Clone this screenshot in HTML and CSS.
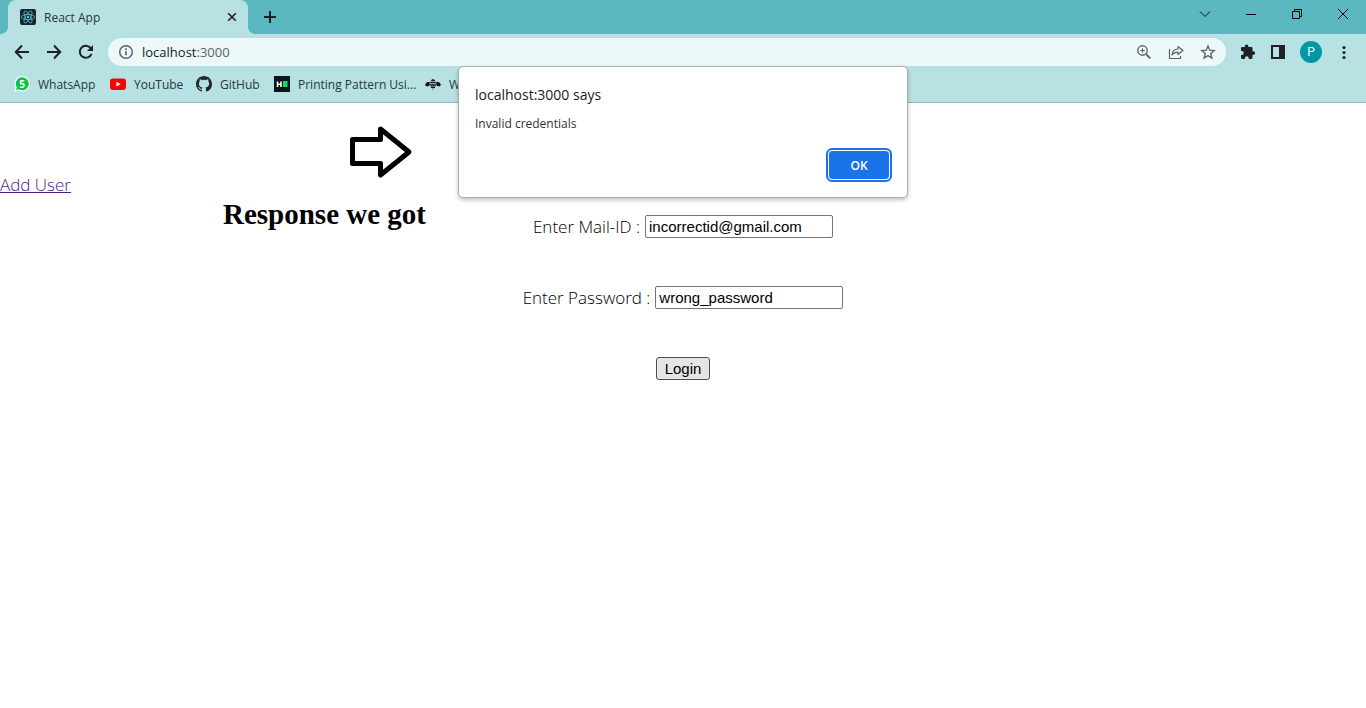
FILE: index.html
```html
<!DOCTYPE html>
<html lang="en">
<head>
<meta charset="utf-8">
<title>React App</title>
<link rel="stylesheet" href="styles.css">
</head>
<body>
<div class="browser">
  <header class="chrome">
    <div class="tabstrip">
      <div class="tab">
        <svg class="tab-icon" width="16" height="16" viewBox="0 0 16 16" fill="none" stroke="#5cc9e6" stroke-width=".7"><rect width="16" height="16" rx="2" fill="#20232a" stroke="none"/><ellipse cx="8" cy="8" rx="6.7" ry="2.6"/><ellipse cx="8" cy="8" rx="6.7" ry="2.6" transform="rotate(60 8 8)"/><ellipse cx="8" cy="8" rx="6.7" ry="2.6" transform="rotate(120 8 8)"/><circle cx="8" cy="8" r="1.2" fill="#5cc9e6" stroke="none"/></svg>
        <span class="tab-title">React App</span>
        <button class="icon-btn" aria-label="Close tab"><svg width="16" height="16" viewBox="0 0 16 16" stroke="#202124" stroke-width="1.6"><path d="M4.200 4.200l7.600 7.600M11.800 4.200l-7.600 7.600"/></svg></button>
      </div>
      <button class="icon-btn new-tab" aria-label="New tab"><svg width="16" height="16" viewBox="0 0 16 16" stroke="#202124" stroke-width="2"><path d="M8 2v12M2 8h12"/></svg></button>
      <div class="window-buttons">
        <button class="icon-btn" aria-label="Search tabs"><svg width="16" height="16" viewBox="0 0 16 16" fill="none" stroke="#111"><path d="M3 5.500l5 5 5-5"/></svg></button>
        <button class="icon-btn" aria-label="Minimize"><svg width="16" height="16" viewBox="0 0 16 16" stroke="#000"><path d="M3 8.500h10"/></svg></button>
        <button class="icon-btn" aria-label="Restore"><svg width="16" height="16" viewBox="0 0 16 16" fill="none" stroke="#000"><path d="M3.500 5.500h7v7h-7zM5.500 5.500v-2h7v7h-2"/></svg></button>
        <button class="icon-btn" aria-label="Close"><svg width="16" height="16" viewBox="0 0 16 16" stroke="#000"><path d="M3 3l10 10M13 3L3 13"/></svg></button>
      </div>
    </div>
    <div class="toolbar">
      <div class="nav">
        <button class="icon-btn" aria-label="Back"><svg width="16" height="16" viewBox="0 0 16 16" fill="none" stroke="#202124" stroke-width="2"><path d="M15 8H2M8 1.500L1.800 8 8 14.500"/></svg></button>
        <button class="icon-btn" aria-label="Forward"><svg width="16" height="16" viewBox="0 0 16 16" fill="none" stroke="#202124" stroke-width="2"><path d="M1 8h13M8 1.500L14.200 8 8 14.500"/></svg></button>
        <button class="icon-btn" aria-label="Reload"><svg width="16" height="16" viewBox="0 0 16 16" fill="none" stroke="#202124" stroke-width="2"><path d="M13.500 9.800A6 6 0 1 1 12.500 4"/><path d="M15 1v6H9z" fill="#202124" stroke="none"/></svg></button>
      </div>
      <div class="omnibox">
        <svg width="16" height="16" viewBox="0 0 16 16" fill="none" stroke="#5f6368" stroke-width="1.500"><circle cx="8" cy="8" r="6.300"/><path d="M8 7.200v4M8 4.300v1.600" stroke-width="1.700"/></svg>
        <div class="url">localhost<span class="port">:3000</span></div>
        <button class="icon-btn" aria-label="Zoom"><svg width="16" height="16" viewBox="0 0 16 16" fill="none" stroke="#5f6368" stroke-width="1.400"><circle cx="6.500" cy="6.500" r="4.700"/><path d="M10 10l4.300 4.300" stroke-width="1.800"/><path d="M6.500 4.200v4.600M4.200 6.500h4.600" stroke-width="1.100"/></svg></button>
        <button class="icon-btn" aria-label="Share"><svg width="16" height="16" viewBox="0 0 16 16" fill="none" stroke="#5f6368" stroke-width="1.200"><path d="M1.500 5v9.500h11V12"/><path d="M10 2.500l5 4-5 4V8.200c-3 0-4.500.8-6 2.800.3-3.600 2.500-5.800 6-6z" stroke-linejoin="round"/></svg></button>
        <button class="icon-btn" aria-label="Bookmark"><svg width="16" height="16" viewBox="0 0 16 16" fill="none" stroke="#5f6368" stroke-width="1.400"><path d="M8 2l1.700 4.200 4.500.4-3.400 3 1 4.400L8 11.600 4.200 14l1-4.400-3.400-3 4.500-.4z"/></svg></button>
      </div>
      <div class="actions">
        <button class="icon-btn" aria-label="Extensions"><svg width="16" height="16" viewBox="0 0 16 16" fill="#202124"><path d="M13.300 7.300h-.8V4.400c0-.8-.6-1.300-1.300-1.300H8.400V2.400a1.800 1.800 0 0 0-3.600 0v.7H2.200C1.500 3.100 1 3.700 1 4.400v2.700h.8a1.900 1.900 0 0 1 0 3.800H1v2.700c0 .8.5 1.300 1.200 1.300h2.700v-.8a1.900 1.900 0 0 1 3.800 0v.8h2.500c.7 0 1.300-.5 1.300-1.300v-2.700h.8a1.800 1.800 0 0 0 0-3.600z"/></svg></button>
        <button class="icon-btn" aria-label="Side panel"><svg width="16" height="16" viewBox="0 0 16 16"><path d="M1 1h14v14H1zM3 3v10h6V3z" fill="#202124" fill-rule="evenodd"/></svg></button>
        <button class="avatar" aria-label="Profile">P</button>
        <button class="icon-btn" aria-label="Menu"><svg width="16" height="16" viewBox="0 0 16 16" fill="#202124"><circle cx="8" cy="3.500" r="1.600"/><circle cx="8" cy="8.500" r="1.600"/><circle cx="8" cy="13.500" r="1.600"/></svg></button>
      </div>
    </div>
    <nav class="bookmarks" aria-label="Bookmarks">
      <a class="bookmark" href="#"><svg width="16" height="16" viewBox="0 0 16 16"><path d="M8.300.2a7.600 7.600 0 1 1-3.700 14.300L.3 15.700l1.200-4.100A7.600 7.600 0 0 1 8.300.2z" fill="#fff"/><path d="M8.300 1.300a6.500 6.500 0 1 1-3.500 12L2 14l.8-2.700a6.500 6.500 0 0 1 5.500-10z" fill="#0cc143"/><text x="8" y="12" class="badge-number">5</text></svg>WhatsApp</a>
      <a class="bookmark bookmark-medium" href="#"><svg width="16" height="16" viewBox="0 0 16 16"><rect y="2.500" width="16" height="11.400" rx="3" fill="#f00"/><path d="M6.400 5.800v4.800l4.200-2.400z" fill="#fff"/></svg>YouTube</a>
      <a class="bookmark bookmark-small" href="#"><svg width="16" height="16" viewBox="0 0 16 16"><path fill="#24292f" d="M8 0C3.580 0 0 3.580 0 8c0 3.540 2.290 6.530 5.470 7.590.4.070.55-.17.55-.38 0-.19-.01-.82-.01-1.490-2.010.37-2.530-.49-2.690-.94-.09-.23-.48-.94-.82-1.130-.28-.15-.68-.52-.01-.53.63-.01 1.080.58 1.230.82.72 1.210 1.870.87 2.330.66.07-.52.28-.87.51-1.070-1.780-.2-3.640-.89-3.640-3.950 0-.87.31-1.590.82-2.150-.08-.2-.36-1.020.08-2.120 0 0 .67-.21 2.200.82a7.600 7.600 0 0 1 4 0c1.530-1.040 2.200-.82 2.200-.82.44 1.100.16 1.920.08 2.120.51.56.82 1.270.82 2.150 0 3.070-1.870 3.750-3.650 3.950.29.25.54.73.54 1.480 0 1.070-.01 1.930-.01 2.200 0 .21.15.46.55.38A8 8 0 0 0 16 8c0-4.420-3.580-8-8-8z"/></svg>GitHub</a>
      <a class="bookmark bookmark-large" href="#"><svg width="16" height="16" viewBox="0 0 16 16"><path fill="#0e141e" d="M0 0h16v16H0z"/><path d="M3.500 5.500v5.500M7 5.500v5.500M3.500 8.200H7" stroke="#fff" stroke-width="1.600"/><path fill="#00e65b" d="M9 5h4.500v6H9z"/></svg>Printing Pattern Usi...</a>
      <a class="bookmark" href="#"><svg width="16" height="16" viewBox="0 0 16 16" fill="#111"><path d="M6 5C6 2.600 10 2.600 10 5zM5.300 5.800h5.400v1.500H5.300zM5 8.200h6v1.500H5zM5.500 10.600h5L9.800 12H6.200zM7 12.700h2L8 13.700zM4.700 5.800L1.800 6.200 0 8.800l1.200 1.400h2.600l1-1.400zM11.300 5.800l2.900.4L16 8.800l-1.200 1.400h-2.600l-1-1.400z"/></svg>W</a>
    </nav>
  </header>

  <main class="page">
    <a class="add-user" href="#">Add User</a>
    <form class="login">
      <div class="field"><label for="mail">Enter Mail-ID :</label><input id="mail" type="text" value="incorrectid@gmail.com"></div>
      <div class="field"><label for="password">Enter Password :</label><input id="password" type="text" value="wrong_password"></div>
      <button class="submit" type="button">Login</button>
    </form>
    <div class="note">
      <svg class="note-arrow" width="64" height="54" viewBox="0 0 64 54" fill="none" stroke="#000" stroke-width="5" stroke-linejoin="round"><path d="M3.500 14.500h28V4l28.500 23L31.500 50V38.500h-28z"/></svg>
      <h1 class="note-text">Response we got</h1>
    </div>
  </main>

  <section class="dialog" role="alertdialog" aria-labelledby="dialog-title" aria-describedby="dialog-message">
    <h2 class="dialog-title" id="dialog-title">localhost:3000 says</h2>
    <p class="dialog-message" id="dialog-message">Invalid credentials</p>
    <button class="ok" type="button">OK</button>
  </section>
</div>
</body>
</html>
```

FILE: styles.css
```css
* { box-sizing: border-box; }
body { margin: 0; background: #fff; color: #000; font-family: "Open Sans", "Noto Sans", sans-serif; }
svg { display: block; flex: none; }
.browser { position: relative; min-height: 100vh; overflow: hidden; }
.chrome { background: #b8e1e4; border-bottom: 1px solid #91b3b6; }
.icon-btn { display: block; flex: none; padding: 0; border: 0; background: none; }

.tabstrip { display: flex; align-items: center; height: 34px; padding-left: 8px; background: #5bb8c1; }
.tab { position: relative; display: flex; align-items: center; gap: 8px; width: 240px; height: 34px; padding: 0 8px 0 12px; border-radius: 8px 8px 0 0; background: #b8e1e4; color: #26373a; font-size: 12px; }
.tab::before, .tab::after { content: ""; position: absolute; bottom: 0; width: 8px; height: 8px; }
.tab::before { right: 100%; background: radial-gradient(circle at 0 0, #5bb8c1 8px, #b8e1e4 8px); }
.tab::after { left: 100%; background: radial-gradient(circle at 100% 0, #5bb8c1 8px, #b8e1e4 8px); }
.tab-title { flex: 1; }
.new-tab { margin-left: 14px; }
.window-buttons { display: flex; gap: 30px; height: 28px; align-items: center; align-self: flex-start; margin-left: auto; padding-right: 15px; }

.toolbar { display: flex; align-items: center; height: 36px; padding: 0 14px; }
.nav { display: flex; gap: 16px; }
.omnibox { display: flex; flex: 1; align-items: center; gap: 16px; height: 28px; margin-left: 14px; padding: 0 10px; border-radius: 14px; background: #ecf8f9; }
.url { flex: 1; margin-left: -8px; color: #202124; font-size: 13px; }
.port { color: #5f6368; }
.actions { display: flex; align-items: center; gap: 14px; margin-left: 14px; }
.avatar { width: 22px; height: 22px; padding: 0; border: 0; border-radius: 50%; background: #0097a7; color: #fff; font: 12px/22px Roboto, sans-serif; }

.bookmarks { display: flex; height: 32px; padding: 0 14px 4px; }
.bookmark { display: flex; flex: none; align-items: center; gap: 8px; width: 96px; color: #26373a; font-size: 12px; text-decoration: none; white-space: nowrap; }
.bookmark-medium { width: 86px; }
.bookmark-small { width: 78px; }
.bookmark-large { width: 151px; }
.badge-number { fill: #fff; font: bold 10px "Open Sans", sans-serif; text-anchor: middle; }

.page { position: relative; padding-top: 70px; font-size: 17px; font-weight: 300; line-height: 23px; }
.add-user { color: #551a8b; text-decoration-thickness: 1px; }
.login { display: flex; flex-direction: column; align-items: center; gap: 48px; margin-top: 19px; }
.field { display: flex; align-items: center; gap: 5px; height: 23px; }
.field input { width: 188px; height: 23px; padding: 1px 3px; border: 1px solid #767676; border-radius: 2px; background: #fff; color: #000; font: 15px "Liberation Sans", Arial, sans-serif; }
.submit { width: 54px; height: 23px; padding: 0; border: 1px solid #4f4f4f; border-radius: 3px; background: #e5e5e5; color: #000; font: 15px "Liberation Sans", Arial, sans-serif; }

.note { position: absolute; top: 22px; left: 223px; }
.note-arrow { margin-left: 126px; }
.note-text { margin: 18px 0 0; font: bold 29px/35px "Liberation Serif", "Times New Roman", serif; }

.dialog { position: absolute; top: 66px; left: 50%; display: flex; flex-direction: column; width: 450px; padding: 18px 16px 17px; border: 1px solid #9fb3b5; border-radius: 5px; background: #fff; box-shadow: 0 2px 4px rgb(0 0 0 / 25%); transform: translateX(-50%); }
.dialog-title { margin: 0; color: #202124; font-size: 14px; font-weight: 400; line-height: 20px; }
.dialog-message { margin: 9px 0 16px; color: #303134; font-size: 12px; line-height: 20px; }
.ok { align-self: flex-end; width: 62px; height: 30px; margin-right: 1px; padding: 0; border: 1px solid #fff; border-radius: 4px; outline: 2px solid #1a73e8; outline-offset: 0; background: #1a73e8; color: #fff; font: 600 12px "Open Sans", sans-serif; }
```
